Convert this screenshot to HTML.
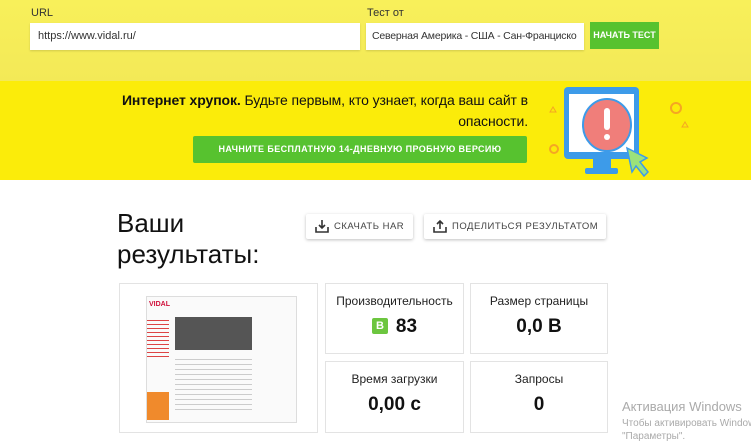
<html><head><style>
body{margin:0;width:751px;height:447px;overflow:hidden;font-family:"Liberation Sans",sans-serif;background:#fff;position:relative}
.a{position:absolute}
.top{left:0;top:0;width:751px;height:81px;background:linear-gradient(180deg,#f8f05a,#f3e957)}
.ban{left:0;top:81px;width:751px;height:99px;background:#fbec0a}
.lbl{font-size:11px;color:#333}
.inp{background:#fff;height:27px;box-shadow:0 1px 2px rgba(0,0,0,.15);font-size:11px;color:#333;line-height:27px;padding-left:8px;box-sizing:border-box;white-space:nowrap;overflow:hidden}
.card{border:1px solid #e3e3e3;background:#fff;box-sizing:border-box;text-align:center}
.card .t{font-size:12px;color:#222;margin-top:10px}
.card .v{font-size:19px;font-weight:bold;color:#111;margin-top:8px}
.btn{background:#fff;box-shadow:0 1px 3px rgba(0,0,0,.25);border-radius:2px;font-size:9.5px;letter-spacing:.5px;color:#444;line-height:25px;box-sizing:border-box;padding-left:28px;white-space:nowrap}
</style></head><body>
<div class="a top"></div>
<div class="a lbl" style="left:31px;top:7px">URL</div>
<div class="a lbl" style="left:367px;top:7px">Тест от</div>
<div class="a inp" style="left:30px;top:23px;width:330px">https://www.vidal.ru/</div>
<div class="a inp" style="left:366px;top:23px;width:218px;padding-left:6px;font-size:10.5px;letter-spacing:-.2px">Северная Америка - США - Сан-Франциско</div>
<div class="a" style="left:590px;top:22px;width:69px;height:27px;background:#57c22f;color:#fff;font-size:9px;font-weight:bold;line-height:27px;text-align:center;white-space:nowrap">НАЧАТЬ ТЕСТ</div>
<div class="a ban"></div>
<div class="a" style="left:80px;top:90px;width:448px;text-align:right;font-size:14px;line-height:21px;color:#111;letter-spacing:-.1px"><b>Интернет хрупок.</b> Будьте первым, кто узнает, когда ваш сайт в опасности.</div>
<div class="a" style="left:193px;top:136px;width:334px;height:27px;background:#57c22f;border-radius:2px;color:#fff;font-size:9px;font-weight:bold;letter-spacing:.4px;text-align:center;line-height:27px">НАЧНИТЕ БЕСПЛАТНУЮ 14-ДНЕВНУЮ ПРОБНУЮ ВЕРСИЮ</div>
<svg class="a" style="left:530px;top:84px" width="175" height="96" viewBox="0 0 175 96">
<rect x="34" y="3" width="75" height="72" rx="4" fill="#3d9be9"/>
<rect x="39" y="10" width="65" height="58" fill="#fff"/>
<rect x="63" y="75" width="18" height="10" fill="#3d9be9"/>
<rect x="55" y="84" width="33" height="6" rx="2" fill="#3d9be9"/>
<ellipse cx="77" cy="41" rx="24" ry="26" fill="#f07e7a" stroke="#3d9be9" stroke-width="2"/>
<rect x="74" y="24" width="6" height="22" rx="3" fill="#fff"/><circle cx="77" cy="53" r="3" fill="#fff"/>
<path d="M97 64 L117 74 L110 78 L118 88 L114 92 L106 82 L102 88 Z" fill="#9be27a" stroke="#3d9be9" stroke-width="1.5"/>
<circle cx="146" cy="24" r="5" fill="none" stroke="#f5a623" stroke-width="2"/>
<circle cx="24" cy="65" r="4" fill="none" stroke="#f5a623" stroke-width="2"/>
<path d="M20 28 l3 -5 l3 5z" fill="none" stroke="#f5a623"/><path d="M152 43 l3 -5 l3 5z" fill="none" stroke="#f5a623"/>
</svg>
<div class="a" style="left:117px;top:208px;font-size:26px;line-height:31px;color:#111">Ваши<br>результаты:</div>
<div class="a btn" style="left:306px;top:214px;width:107px;height:25px">СКАЧАТЬ HAR</div>
<div class="a btn" style="left:424px;top:214px;width:182px;height:25px">ПОДЕЛИТЬСЯ РЕЗУЛЬТАТОМ</div>
<svg class="a" style="left:315px;top:219px" width="14" height="14"><path d="M1 8v5h12V8M7 1v8M4 6l3 3 3-3" stroke="#333" stroke-width="1.6" fill="none"/></svg>
<svg class="a" style="left:433px;top:219px" width="14" height="14"><path d="M1 8v5h12V8M7 10V2M4 5l3-3 3 3" stroke="#333" stroke-width="1.6" fill="none"/></svg>
<div class="a card" style="left:119px;top:283px;width:199px;height:150px"></div>
<div class="a" style="left:146px;top:296px;width:149px;height:125px;background:#fafafa;border:1px solid #ddd">
<div style="position:absolute;left:2px;top:4px;color:#d0103a;font-weight:bold;font-size:7px">VIDAL</div>
<div style="position:absolute;left:28px;top:20px;width:77px;height:33px;background:#555"></div>
<div style="position:absolute;left:0;top:20px;width:22px;height:40px;background:repeating-linear-gradient(#fafafa 0 3px,#d44 3px 4px)"></div>
<div style="position:absolute;left:0;top:95px;width:22px;height:28px;background:#f08a2c"></div>
<div style="position:absolute;left:28px;top:58px;width:77px;height:55px;background:repeating-linear-gradient(#fafafa 0 4px,#ccc 4px 5px)"></div>
</div>
<div class="a card" style="left:325px;top:283px;width:139px;height:71px"><div class="t">Производительность</div><div class="v"><span style="display:inline-block;width:16px;height:16px;background:#6cc63f;color:#fff;font-size:11px;line-height:16px;border-radius:2px;vertical-align:3px;margin-right:8px">B</span>83</div></div>
<div class="a card" style="left:470px;top:283px;width:138px;height:71px"><div class="t">Размер страницы</div><div class="v">0,0 B</div></div>
<div class="a card" style="left:325px;top:361px;width:139px;height:72px"><div class="t">Время загрузки</div><div class="v">0,00 c</div></div>
<div class="a card" style="left:470px;top:361px;width:138px;height:72px"><div class="t">Запросы</div><div class="v">0</div></div>
<div class="a" style="left:622px;top:399px;color:#aaa;font-size:13px;white-space:nowrap">Активация Windows</div>
<div class="a" style="left:622px;top:417px;color:#aaa;font-size:10px;line-height:13px;white-space:nowrap">Чтобы активировать Windows<br>"Параметры".</div>
</body></html>
